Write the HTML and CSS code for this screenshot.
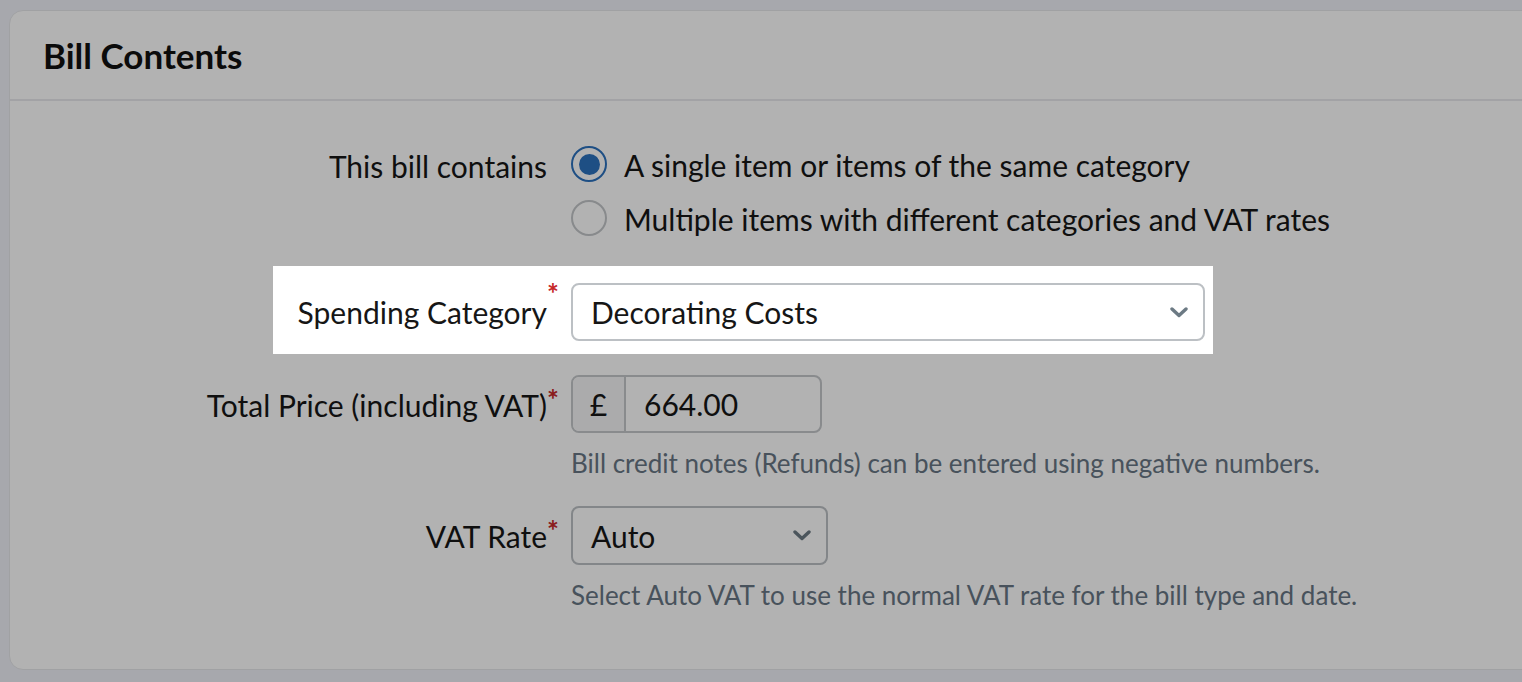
FILE: index.html
```html
<!DOCTYPE html>
<html lang="en">
<head>
<meta charset="utf-8">
<title>Bill Contents</title>
<link rel="stylesheet" href="styles.css">
</head>
<body>
<div class="page">
  <section class="card">
    <header class="card-header">
      <h2 class="card-title">Bill Contents</h2>
    </header>
    <div class="card-body">
      <div class="row row-radios">
        <div class="label"><span class="label-text">This bill contains</span></div>
        <div class="control radios">
          <label class="radio"><span class="radio-mark checked"></span><span>A single item or items of the same category</span></label>
          <label class="radio"><span class="radio-mark"></span><span>Multiple items with different categories and VAT rates</span></label>
        </div>
      </div>

      <div class="row row-focus">
        <div class="label"><span class="label-text">Spending Category<span class="req">*</span></span></div>
        <div class="control">
          <div class="select select-wide">
            <span>Decorating Costs</span>
            <svg class="chevron" width="18" height="11" viewBox="0 0 18 11"><polyline points="2,2 9,8.5 16,2" fill="none" stroke="currentColor" stroke-width="3.4" stroke-linecap="round" stroke-linejoin="round"/></svg>
          </div>
        </div>
      </div>

      <div class="row row-price">
        <div class="label"><span class="label-text">Total Price (including VAT)<span class="req">*</span></span></div>
        <div class="control">
          <div class="input-group">
            <span class="prefix">£</span>
            <span class="value">664.00</span>
          </div>
          <p class="help">Bill credit notes (Refunds) can be entered using negative numbers.</p>
        </div>
      </div>

      <div class="row row-vat">
        <div class="label"><span class="label-text">VAT Rate<span class="req">*</span></span></div>
        <div class="control">
          <div class="select select-small">
            <span>Auto</span>
            <svg class="chevron" width="18" height="11" viewBox="0 0 18 11"><polyline points="2,2 9,8.5 16,2" fill="none" stroke="currentColor" stroke-width="3.4" stroke-linecap="round" stroke-linejoin="round"/></svg>
          </div>
          <p class="help">Select Auto VAT to use the normal VAT rate for the bill type and date.</p>
        </div>
      </div>
    </div>
  </section>
</div>
<div class="dim"></div>
</body>
</html>
```

FILE: styles.css
```css
html, body {
  margin: 0;
  height: 100%;
}
body {
  background: #eff1f8;
  font-family: Lato, "Noto Sans", sans-serif;
  color: #161616;
  font-size: 30px;
  overflow: hidden;
}
.page {
  padding: 10px 0 0 9px;
}
.card {
  width: 1580px;
  background: #ffffff;
  border: 1px solid #e6e7ea;
  border-radius: 14px;
}
.card-header {
  height: 88px;
  border-bottom: 2px solid #e9e9ed;
  display: flex;
  align-items: center;
  padding-left: 33px;
}
.card-title {
  margin: 0;
  font-size: 35px;
  font-weight: 700;
  color: #111;
}
.card-body {
  padding: 45px 0 59px;
}
.row {
  display: grid;
  grid-template-columns: 537px auto;
  column-gap: 24px;
  align-items: center;
}
.label {
  text-align: right;
}
.label-text {
  position: relative;
}
.req {
  position: absolute;
  left: 100%;
  top: -18px;
  margin-left: 0;
  color: #c62828;
  font-size: 28px;
  font-weight: 700;
}
.row-radios {
  align-items: start;
}
.row-radios .label {
  line-height: 40px;
}
.radios {
  display: flex;
  flex-direction: column;
  gap: 18px;
}
.radio {
  display: flex;
  align-items: center;
  gap: 17px;
  height: 36px;
  line-height: 40px;
}
.radio > span:last-child {
  padding-top: 1px;
}
.radio-mark {
  box-sizing: border-box;
  width: 36px;
  height: 36px;
  border-radius: 50%;
  border: 2px solid #c3c6c9;
  display: flex;
  align-items: center;
  justify-content: center;
  flex: none;
}
.radio-mark.checked {
  border-color: #2c71be;
}
.radio-mark.checked::after {
  content: "";
  width: 21px;
  height: 21px;
  border-radius: 50%;
  background: #2c71be;
}
.row-focus {
  position: relative;
  z-index: 20;
  background: #ffffff;
  width: max-content;
  margin: 30px 0 0 263px;
  padding: 17px 8px 13px 17px;
  grid-template-columns: 257px auto;
}
.select {
  box-sizing: border-box;
  height: 58px;
  border: 2px solid #bcc0c4;
  border-radius: 8px;
  display: flex;
  align-items: center;
  justify-content: space-between;
  padding: 0 15px 0 18px;
  background: #fff;
}
.select-wide {
  width: 634px;
}
.select-small {
  width: 257px;
  height: 59px;
}
.chevron {
  color: #6c7a84;
  display: block;
}
.row-price {
  margin-top: 21px;
  align-items: start;
}
.row-price .label,
.row-vat .label {
  line-height: 60px;
}
.input-group {
  box-sizing: border-box;
  width: 251px;
  height: 58px;
  border: 2px solid #c4c7ca;
  border-radius: 8px;
  display: flex;
  overflow: hidden;
}
.prefix {
  width: 51px;
  flex: none;
  display: flex;
  align-items: center;
  justify-content: center;
  background: #f5f5f6;
  border-right: 2px solid #c4c7ca;
}
.value {
  display: flex;
  align-items: center;
  padding-left: 18px;
}
.help {
  margin: 15px 0 0;
  font-size: 26px;
  line-height: 30px;
  color: #687684;
}
.row-vat {
  margin-top: 28px;
  align-items: start;
}
.dim {
  position: fixed;
  inset: 0;
  background: rgba(0, 0, 0, 0.3);
  z-index: 10;
}
```
